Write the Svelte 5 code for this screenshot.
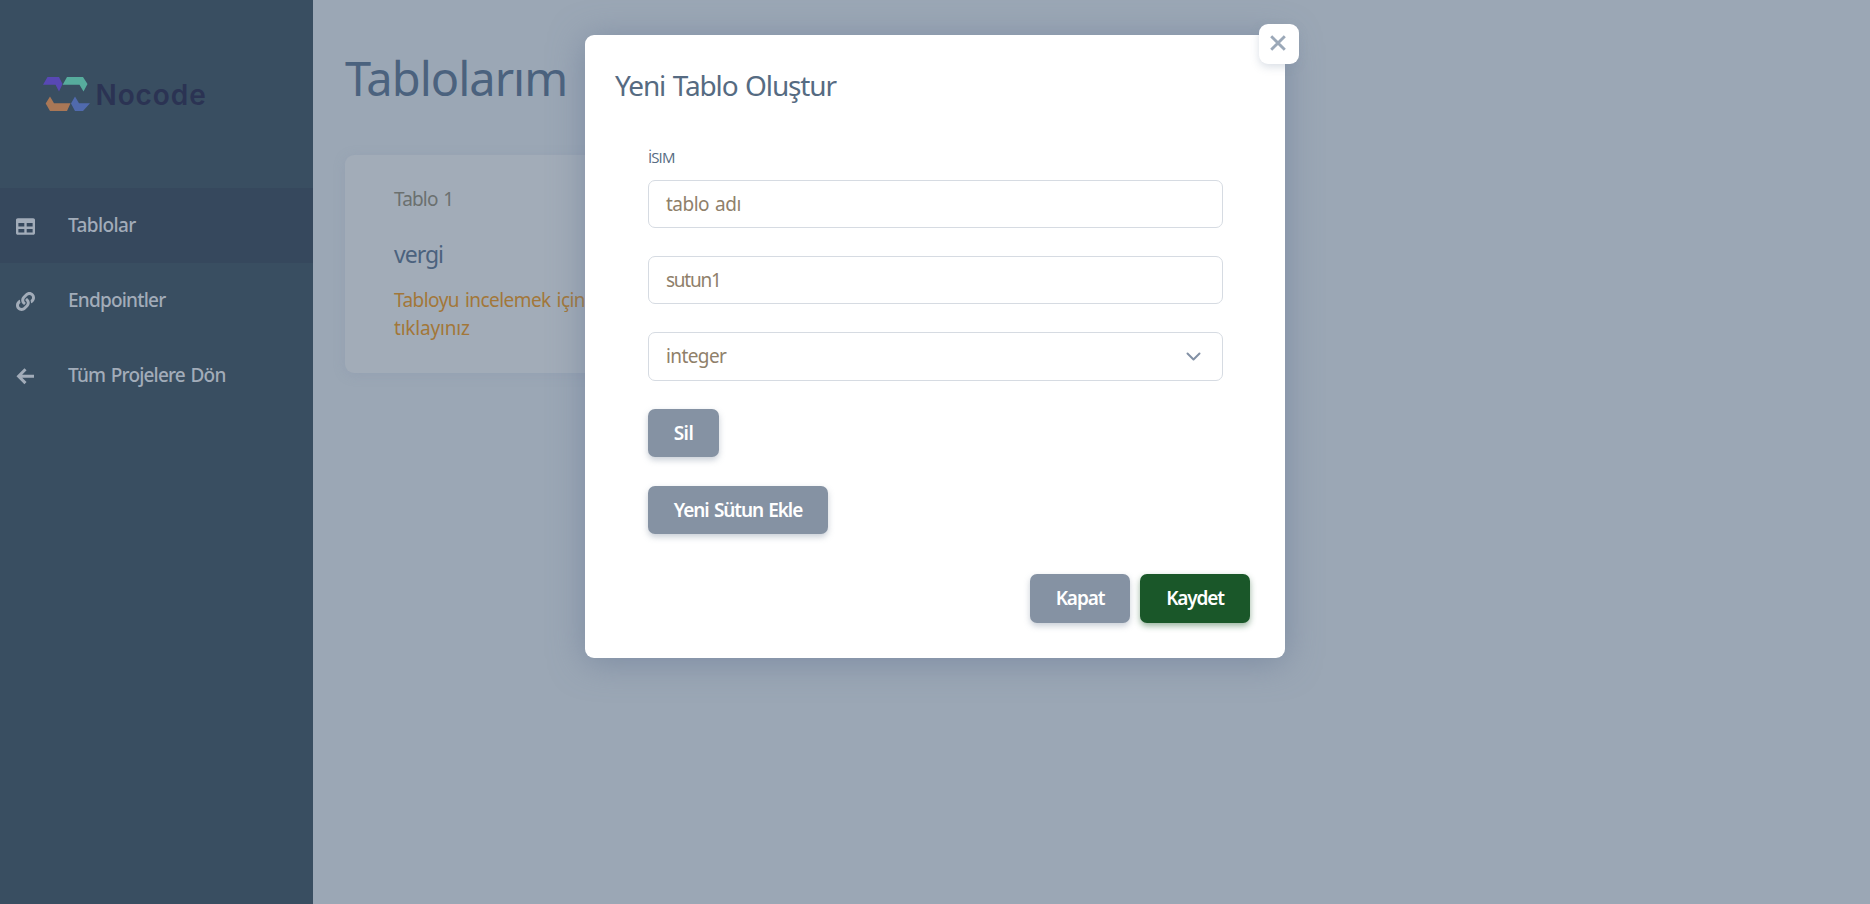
<script>
  const nav = [
    { label: 'Tablolar', icon: 'table', active: true, ls: -0.62 },
    { label: 'Endpointler', icon: 'link', active: false, ls: -0.78 },
    { label: 'Tüm Projelere Dön', icon: 'arrow', active: false, ls: -0.82 }
  ];
</script>

<div class="page">
  <aside>
    <div class="logo">
      <svg width="48" height="36" viewBox="43 76 48 36">
        <path fill="#5848b4" d="M43 84.7 47.500 77H59L62.500 84 59 91.500 55.500 84.700Z" />
        <path fill="#57ac9d" d="M62.700 84.700 67 77H83L87.500 84 83.500 91.500 79.500 84.700Z" />
        <path fill="#a97756" d="M50 96.500 54 103.300H70.500L67 110.900H50L45.700 103.500Z" />
        <path fill="#506aad" d="M75 96.500 79 103.300H90L83 110.900H75L71 103.500Z" />
      </svg>
      <span>Nocode</span>
    </div>
    <nav>
      {#each nav as item}
        <div class="item" class:active={item.active}>
          {#if item.icon === 'table'}
            <svg width="19" height="19" viewBox="0 0 512 512"><path fill="currentColor" d="M464 32H48C21.500 32 0 53.500 0 80v352c0 26.500 21.500 48 48 48h416c26.500 0 48-21.500 48-48V80c0-26.500-21.500-48-48-48zM224 416H64v-96h160v96zm0-160H64v-96h160v96zm224 160H288v-96h160v96zm0-160H288v-96h160v96z" /></svg>
          {:else if item.icon === 'link'}
            <svg width="19" height="19" viewBox="0 0 512 512"><path fill="currentColor" d="M326.612 185.391c59.747 59.809 58.927 155.698.36 214.590-.11.120-.240.250-.360.370l-67.200 67.200c-59.270 59.270-155.699 59.262-214.960 0-59.270-59.260-59.270-155.700 0-214.960l37.106-37.106c9.840-9.840 26.786-3.300 27.294 10.606.648 17.722 3.826 35.527 9.690 52.721 1.986 5.822.567 12.262-3.783 16.612l-13.087 13.087c-28.026 28.026-28.905 73.660-1.155 101.960 28.024 28.579 74.086 28.749 102.325.510l67.200-67.190c28.191-28.191 28.073-73.757 0-101.830-3.701-3.694-7.429-6.564-10.341-8.569a16.037 16.037 0 0 1-6.947-12.606c-.396-10.567 3.348-21.456 11.698-29.806l21.054-21.055c5.521-5.521 14.182-6.199 20.584-1.731a152.482 152.482 0 0 1 20.522 17.197zM467.547 44.449c-59.261-59.262-155.690-59.270-214.960 0l-67.200 67.200c-.120.120-.250.250-.360.370-58.566 58.892-59.387 154.781.360 214.590a152.454 152.454 0 0 0 20.521 17.196c6.402 4.468 15.064 3.789 20.584-1.731l21.054-21.055c8.350-8.350 12.094-19.239 11.698-29.806a16.037 16.037 0 0 0-6.947-12.606c-2.912-2.005-6.640-4.875-10.341-8.569-28.073-28.073-28.191-73.639 0-101.830l67.200-67.190c28.239-28.239 74.300-28.069 102.325.510 27.750 28.300 26.872 73.934-1.155 101.960l-13.087 13.087c-4.350 4.350-5.769 10.790-3.783 16.612 5.864 17.194 9.042 34.999 9.690 52.721.509 13.906 17.454 20.446 27.294 10.606l37.106-37.106c59.271-59.259 59.271-155.699.001-214.959z" /></svg>
          {:else}
            <svg width="19" height="19" viewBox="0 0 19 19"><path d="M9.500 2.300 2.600 9.200 9.500 16.100M3.200 9.200H18" fill="none" stroke="currentColor" stroke-width="3" /></svg>
          {/if}
          <span style:letter-spacing="{item.ls}px">{item.label}</span>
        </div>
      {/each}
    </nav>
  </aside>

  <main>
    <h1>Tablolarım</h1>
    <section class="card">
      <div class="num">Tablo 1</div>
      <h2>vergi</h2>
      <p><span class="l1">Tabloyu incelemek için</span> <span class="l2">tıklayınız</span></p>
    </section>
  </main>

  <div class="modal">
    <button class="close" aria-label="Kapat">
      <svg width="16" height="16" viewBox="0 0 16 16"><path d="M1.200 1.200 14.800 14.800M14.800 1.200 1.200 14.800" stroke="#9ba8b8" stroke-width="2.900" /></svg>
    </button>
    <h3>Yeni Tablo Oluştur</h3>
    <div class="form">
      <div class="label">İSIM</div>
      <div class="field" style:letter-spacing="-0.5px">tablo adı</div>
      <div class="field" style:letter-spacing="-1.25px">sutun1</div>
      <div class="field select" style:letter-spacing="-0.6px">
        integer
        <svg width="15" height="10" viewBox="0 0 15 10"><path d="M1.500 1.500 7.500 7.500 13.500 1.500" fill="none" stroke="#8391a5" stroke-width="2" stroke-linecap="round" stroke-linejoin="round" /></svg>
      </div>
      <button class="btn sil">Sil</button>
      <button class="btn add">Yeni Sütun Ekle</button>
    </div>
    <footer>
      <button class="btn kapat">Kapat</button>
      <button class="btn save">Kaydet</button>
    </footer>
  </div>
</div>

<style>
  :global(body) { margin: 0; overflow: hidden; }
  .page { position: relative; display: flex; height: 904px; background: #9ba7b5; font-family: 'Trebuchet MS', 'Noto Sans', sans-serif; font-size: 19px; word-spacing: 1.5px; box-sizing: border-box; }
  .page * { box-sizing: border-box; }
  aside { width: 313px; background: #394e61; color: #a2acb9; }
  .logo { height: 188px; padding: 0 0 0 43px; display: flex; align-items: center; }
  .logo span { margin: 1px 0 0 4.5px; font: 600 28px/36px Inter, sans-serif; letter-spacing: .9px; color: #2b3353; }
  .item { height: 75px; display: flex; align-items: center; padding-left: 16px; font-weight: 500; }
  .item svg { width: 19px; margin-top: 2px; }
  .item span { margin-left: 33px; margin-top: -1px; }
  .active { background: #36485d; }
  main { padding: 50px 0 0 32px; }
  h1 { margin: 0 0 50px; font-size: 47px; line-height: 57px; height: 55px; font-weight: 400; letter-spacing: -1px; color: #4b627e; }
  .card { width: 300px; height: 218px; padding: 30px 49px; border-radius: 9px; background: #a2acb8; box-shadow: 0 2px 12px rgba(130, 145, 170, .28); }
  .num { line-height: 28px; letter-spacing: -.85px; color: #6b706f; }
  h2 { margin: 25px 0 16px; font-size: 23px; line-height: 32px; font-weight: 400; letter-spacing: -1px; color: #4b627e; }
  p { margin: 0; line-height: 28px; color: #a27739; }
  .l1 { letter-spacing: -.55px; white-space: nowrap; }
  .l2 { letter-spacing: -.2px; }
  .modal { position: absolute; left: 585px; top: 35px; width: 700px; height: 623px; padding: 30px 35px 35px 30px; border-radius: 9px; background: #fff; box-shadow: 0 4px 34px rgba(102, 119, 149, .58); }
  .close { position: absolute; right: -13.5px; top: -11px; width: 39.5px; height: 39.5px; padding: 0 1px 1px 0; border: 0; border-radius: 9px; background: #fff; display: grid; place-items: center; box-shadow: 0 3px 8px rgba(130, 145, 170, .3); }
  h3 { margin: 0; font-size: 28px; line-height: 40px; font-weight: 400; letter-spacing: -1.15px; color: #566b82; }
  .form { margin: 42px 27px 0 33px; display: flex; flex-direction: column; align-items: flex-start; }
  .label { height: 33px; font-family: 'Trebuchet MS', 'Open Sans', sans-serif; font-size: 15px; line-height: 20px; letter-spacing: -.9px; color: #566b82; }
  .field { width: 100%; height: 48px; margin-bottom: 28px; padding: 0 17px; line-height: 46px; border: 1px solid #d6dbe2; border-radius: 7px; color: #8f806a; }
  .select { height: 49px; display: flex; justify-content: space-between; line-height: 46px; }
  .select svg { margin: 19px 4px 0 0; }
  .btn { height: 48px; padding: 0; border: 0; border-radius: 7px; font: 600 19px/48px 'Trebuchet MS', 'Noto Sans', sans-serif; word-spacing: 1.5px; color: #fff; background: #8592a3; box-shadow: 0 3px 6px rgba(133, 146, 163, .45); white-space: nowrap; }
  .sil { width: 71px; letter-spacing: -.5px; }
  .add { width: 180px; margin-top: 29px; letter-spacing: -1.1px; }
  footer { display: flex; justify-content: flex-end; gap: 10px; margin-top: 40px; }
  footer .btn { height: 49px; padding-bottom: 1px; }
  .kapat { width: 100px; letter-spacing: -1.1px; }
  .save { width: 110px; letter-spacing: -1.15px; background: #1a5729; box-shadow: 0 3px 6px rgba(26, 87, 41, .45); }
</style>
